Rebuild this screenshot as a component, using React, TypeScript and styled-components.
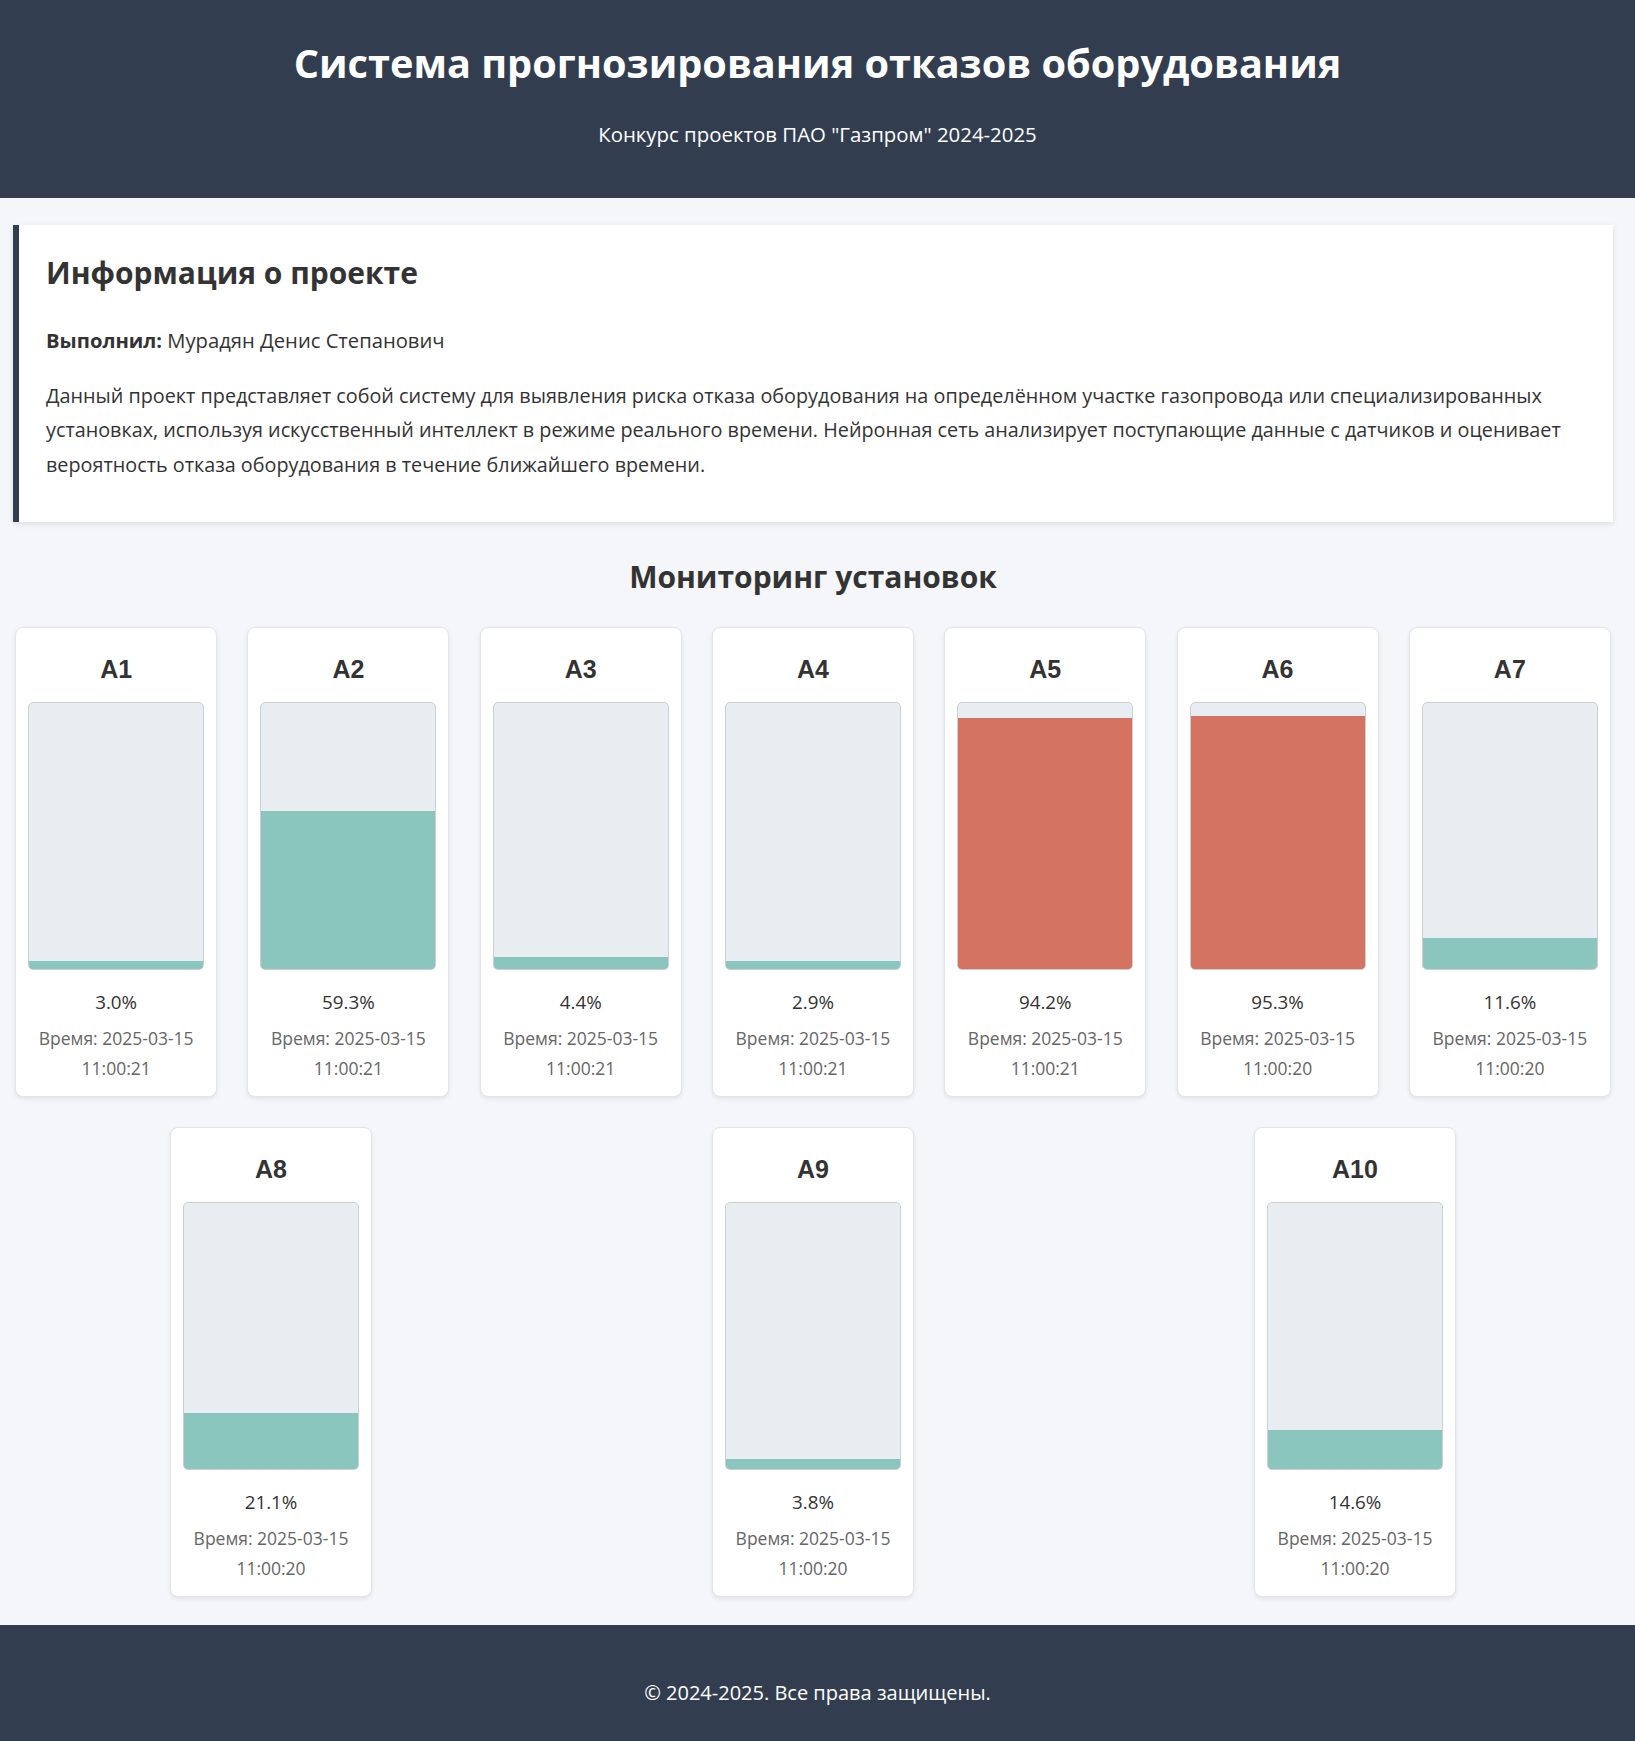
import React from "react";
import styled, { createGlobalStyle } from "styled-components";

const GlobalStyle = createGlobalStyle`
  html, body { margin: 0; padding: 0; }
  body {
    background: #f4f6f9;
    font-family: "Open Sans", "Noto Sans", "Liberation Sans", sans-serif;
    color: #333;
  }
  * { box-sizing: border-box; }
`;

const Header = styled.header`
  background: #323e4f;
  color: #fff;
  text-align: center;
  padding: 39px 20px 50px;
`;

const Title = styled.h1`
  margin: 0;
  font-size: 39.7px;
  line-height: 48px;
  font-weight: 700;
`;

const Subtitle = styled.p`
  margin: 33px 0 0;
  font-size: 20.4px;
  line-height: 28px;
`;

const Main = styled.main`
  padding: 27px 22px 28px 13px;
`;

const InfoCard = styled.section`
  background: #fff;
  border-left: 6px solid #323e4f;
  box-shadow: 0 2px 6px rgba(0, 0, 0, 0.1);
  padding: 28px 28px 40px 27px;
`;

const InfoTitle = styled.h2`
  margin: 0;
  font-size: 30px;
  line-height: 39px;
  font-weight: 700;
  color: #333;
`;

const InfoText = styled.p<{ $gap: number; $size: number }>`
  margin: ${(p) => p.$gap}px 0 0;
  font-size: ${(p) => p.$size}px;
  line-height: 34.5px;
  color: #333;
`;

const SectionTitle = styled.h2`
  margin: 35px 0 31px;
  text-align: center;
  font-size: 30px;
  line-height: 39px;
  font-weight: 700;
  color: #333;
`;

const Grid = styled.div`
  display: flex;
  flex-wrap: wrap;
  justify-content: space-around;
  gap: 30px;
  padding: 0 2px;
`;

const Card = styled.div`
  width: 202px;
  background: #fff;
  border: 1px solid #e2e4e8;
  border-radius: 8px;
  box-shadow: 0 2px 4px rgba(0, 0, 0, 0.08);
  padding: 12px 12px 13px;
  text-align: center;
`;

const CardTitle = styled.h3`
  margin: 15px 0 18px;
  font-family: "Liberation Sans", Arial, sans-serif;
  font-size: 25px;
  line-height: 29px;
  font-weight: 700;
  color: #333;
`;

const Bar = styled.div`
  height: 268px;
  background: #e8edf1;
  border: 1px solid #cbcfd4;
  border-radius: 5px;
  overflow: hidden;
  display: flex;
  flex-direction: column;
  justify-content: flex-end;
`;

const Fill = styled.div<{ $danger: boolean }>`
  background: ${(p) => (p.$danger ? "#d47361" : "#8ac5be")};
`;

const Percent = styled.div`
  margin-top: 16px;
  font-size: 18.8px;
  line-height: 32px;
  color: #333;
`;

const Time = styled.div`
  margin-top: 5px;
  font-size: 17.5px;
  line-height: 30px;
  color: #666;
`;

const Footer = styled.footer`
  background: #323e4f;
  color: #fff;
  text-align: center;
  padding: 54px 20px 34px;
  font-size: 20px;
  line-height: 28px;
`;

type Unit = { name: string; value: number; time: string };

const units: Unit[] = [
  { name: "A1", value: 3.0, time: "11:00:21" },
  { name: "A2", value: 59.3, time: "11:00:21" },
  { name: "A3", value: 4.4, time: "11:00:21" },
  { name: "A4", value: 2.9, time: "11:00:21" },
  { name: "A5", value: 94.2, time: "11:00:21" },
  { name: "A6", value: 95.3, time: "11:00:20" },
  { name: "A7", value: 11.6, time: "11:00:20" },
  { name: "A8", value: 21.1, time: "11:00:20" },
  { name: "A9", value: 3.8, time: "11:00:20" },
  { name: "A10", value: 14.6, time: "11:00:20" },
];

export default function App() {
  return (
    <>
      <GlobalStyle />
      <Header>
        <Title>Система прогнозирования отказов оборудования</Title>
        <Subtitle>Конкурс проектов ПАО "Газпром" 2024-2025</Subtitle>
      </Header>
      <Main>
        <InfoCard>
          <InfoTitle>Информация о проекте</InfoTitle>
          <InfoText $gap={31} $size={20.2}>
            <strong>Выполнил:</strong> Мурадян Денис Степанович
          </InfoText>
          <InfoText $gap={21} $size={19.8}>
            Данный проект представляет собой систему для выявления риска отказа
            оборудования на определённом участке газопровода или
            специализированных установках, используя искусственный интеллект в
            режиме реального времени. Нейронная сеть анализирует поступающие
            данные с датчиков и оценивает вероятность отказа оборудования в
            течение ближайшего времени.
          </InfoText>
        </InfoCard>
        <SectionTitle>Мониторинг установок</SectionTitle>
        <Grid>
          {units.map((u) => (
            <Card key={u.name}>
              <CardTitle>{u.name}</CardTitle>
              <Bar>
                <Fill $danger={u.value > 80} style={{ height: `${u.value}%` }} />
              </Bar>
              <Percent>{u.value.toFixed(1)}%</Percent>
              <Time>
                Время: 2025-03-15
                <br />
                {u.time}
              </Time>
            </Card>
          ))}
        </Grid>
      </Main>
      <Footer>© 2024-2025. Все права защищены.</Footer>
    </>
  );
}
